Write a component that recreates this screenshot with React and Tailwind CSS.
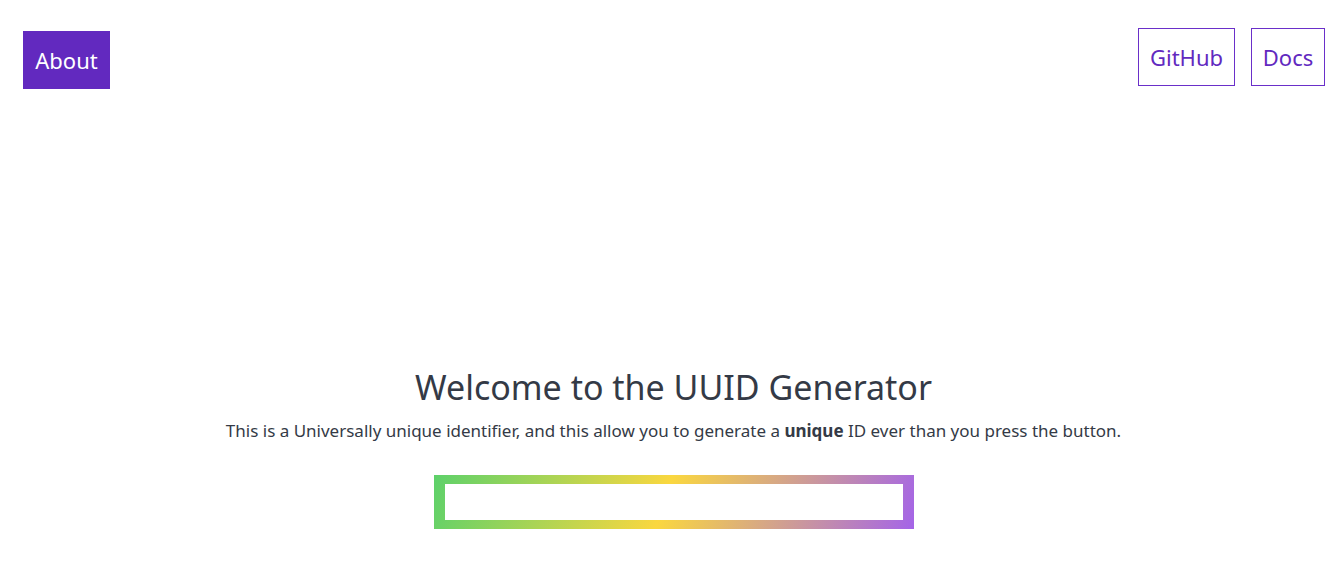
import React from "react";

const App = () => {
  return (
    <div className="min-h-[584px] bg-white font-['Noto_Sans',sans-serif] text-[#343a46]">
      {/* barra superior */}
      <div className="flex items-start justify-between pl-[23px] pr-[12px] pt-[28px]">
        <button className="mt-[3px] h-[58px] w-[87px] bg-[#6229bf] text-[22px] text-white">
          About
        </button>
        <div className="flex gap-4">
          <a className="flex h-[58px] w-[97px] items-center justify-center border border-[#6a2fc9] text-[22px] text-[#6229bf]">
            GitHub
          </a>
          <a className="flex h-[58px] w-[74px] items-center justify-center border border-[#6a2fc9] text-[22px] text-[#6229bf]">
            Docs
          </a>
        </div>
      </div>

      {/* contenido */}
      <div className="flex flex-col items-center pl-[10px] pt-[276px]">
        <h1 className="text-[34px] leading-[44px]">Welcome to the UUID Generator</h1>
        <p className="mt-[9px] text-[17px]">
          This is a Universally unique identifier, and this allow you to generate a <b>unique</b> ID ever than you press the button.
        </p>
        <div className="mt-[31px] w-[480px] bg-[linear-gradient(108deg,#5dd16a,#fad73f_48%,#a464e8)] px-[11px] py-[9px]">
          <div className="h-[36px] bg-white"></div>
        </div>
      </div>
    </div>
  );
};

export default App;
